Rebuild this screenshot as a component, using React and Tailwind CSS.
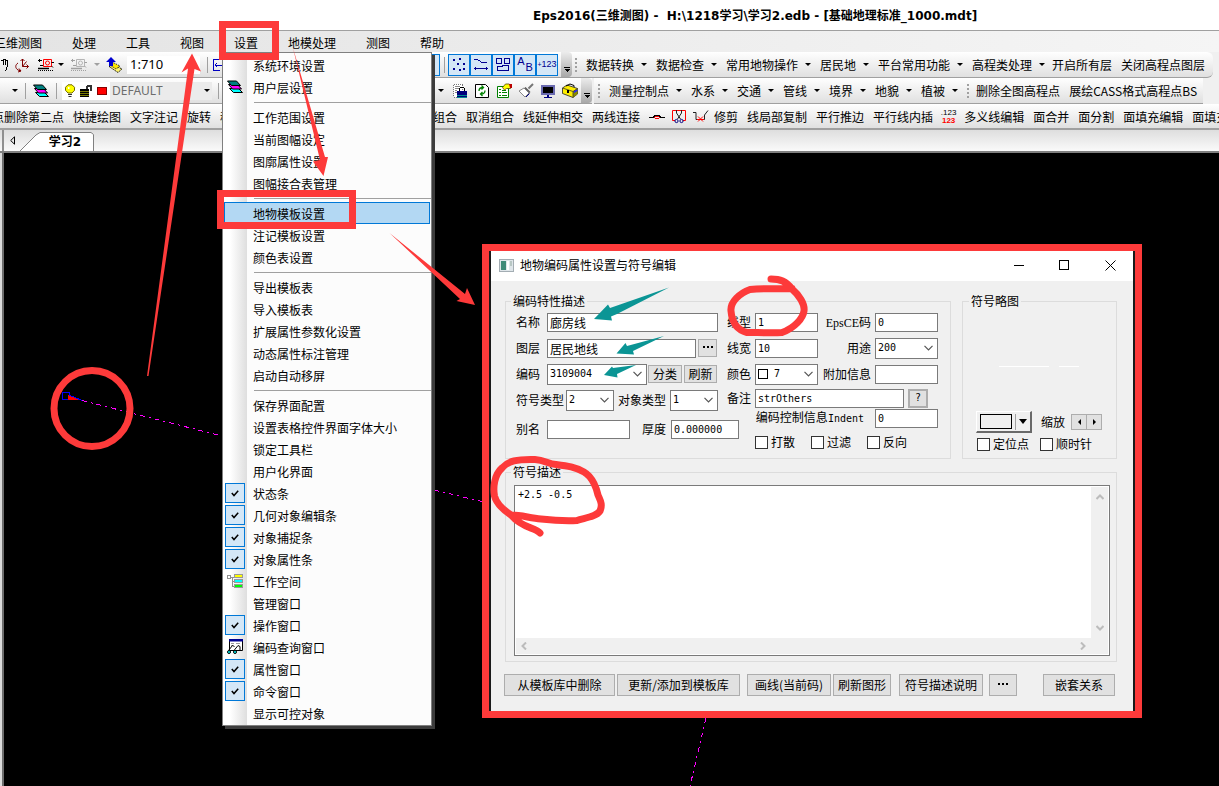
import React from 'react';

const RED = '#fd3a3a';
const TEAL = '#0b9595';

/* ---------- small building blocks ---------- */

function Svg({ w = 16, h = 16, children, label }) {
  return (
    <svg width={w} height={h} viewBox={`0 0 ${w} ${h}`} fill="none" className="shrink-0" role={label ? 'img' : undefined} aria-label={label} shapeRendering="crispEdges">
      {children}
    </svg>
  );
}

function Caret({ className = 'text-black' }) {
  return (
    <span className={`flex shrink-0 items-center ${className}`}>
      <svg width="6" height="3" viewBox="0 0 6 3" aria-hidden="true">
        <path d="M0 0h6L3 3z" fill="currentColor" />
      </svg>
    </span>
  );
}

function Chevron() {
  return (
    <svg width="9" height="6" viewBox="0 0 9 6" fill="none" aria-hidden="true" className="pointer-events-none absolute right-1 top-1/2 -translate-y-1/2">
      <path d="M.5 .8l4 4 4-4" stroke="#555" strokeWidth="1.2" />
    </svg>
  );
}

function IconButton({ label, className, children }) {
  return (
    <button type="button" aria-label={label} className={`flex h-full shrink-0 items-center justify-center ${className}`}>
      {children}
    </button>
  );
}

function Divider() {
  return <span className="h-4 w-px shrink-0 bg-[#a0a0a0]" />;
}

function Grip() {
  return (
    <svg width="3" height="16" viewBox="0 0 3 16" className="shrink-0" aria-hidden="true" shapeRendering="crispEdges">
      <path d="M1 1v15" stroke="#a0a0a0" strokeWidth="2" strokeDasharray="2 2" />
    </svg>
  );
}

function Overflow() {
  return (
    <button type="button" aria-label="更多按钮" className="flex h-full w-[11px] shrink-0 items-end justify-center rounded-r bg-linear-to-b from-[#ececec] to-[#a8a8a8] pb-1">
      <svg width="6" height="6" viewBox="0 0 6 6" aria-hidden="true" shapeRendering="crispEdges">
        <path d="M0 0h6v1H0zM0 2h6L3 5z" fill="#000" />
      </svg>
    </button>
  );
}

function DropButton({ children }) {
  return (
    <button type="button" className="flex h-full shrink-0 items-center gap-[7px] whitespace-nowrap pr-[9px]">
      {children}
      <Caret />
    </button>
  );
}

function TextButton({ children }) {
  return (
    <button type="button" className="h-full shrink-0 whitespace-nowrap">
      {children}
    </button>
  );
}

/* ---------- icons ---------- */

const LayersIcon = () => (
  <svg width="16" height="14" viewBox="0 0 16 14" fill="none" className="shrink-0" aria-hidden="true">
    <path d="M2.500 8.500h9l4 4h-9z" fill="#0ff" stroke="#000" />
    <path d="M1.500 4.500h9l4 4.500h-9z" fill="#f0f" stroke="#000" />
    <path d="M.5 1h9l4 4.500h-9z" fill="#008080" stroke="#000" />
  </svg>
);

const HandIcon = () => (
  <Svg w={8} h={16}>
    <path d="M0 4l2-1v5M2.500 2.500h2v5M5 3.500h1.500V9l-2 5" stroke="#000" />
  </Svg>
);

const RotateIcon = () => (
  <svg width="16" height="16" viewBox="0 0 16 16" fill="none" className="shrink-0" aria-hidden="true">
    <path d="M8.500 2v7.500h6M6.500 4l2-2 2 2M12.500 7.500l2 2-2 2M8.500 9.500l4-5M4 6c-3 2-3 5 0 7l3 1M5 11.500l2 2.500-3 1" stroke="#800000" />
  </svg>
);

const ViewBoxIcon = ({ main = '#f00', line = '#000' }) => (
  <svg width="16" height="14" viewBox="0 0 16 14" fill="none" className="shrink-0" aria-hidden="true">
    <path d="M5.500 1.500h8v7h-8z" stroke={main} />
    <circle cx="9.500" cy="5" r="2" stroke={main} />
    <path d="M0 2.500h4M1.500 1v3M13.500 4.500H16M2 7.500h3M13.500 8l1.500 1.500" stroke={line} />
    <path d="M0 10.500h11" stroke={line} strokeWidth="1.500" />
    <path d="M0 12.500h15" stroke={line} strokeDasharray="1 1" />
  </svg>
);

const UpLayersIcon = () => (
  <svg width="18" height="16" viewBox="0 0 18 16" fill="none" className="shrink-0" aria-hidden="true">
    <path d="M4 9.500l4-2 9 4.500-4 3.500z" fill="#fff36b" stroke="#000" strokeDasharray="1.500 1" />
    <path d="M4 7.500l4-2 7 3.500-4 3z" fill="#ffe800" stroke="#333" strokeDasharray="1.500 1" />
    <path d="M6 0l5 5H8v4H4V5H1z" fill="#0000d0" />
  </svg>
);

const FitIcon = () => (
  <Svg>
    <path d="M1.500 2v12M2 2.500h6M2 13.500h6M3 8h8M5 6L3 8l2 2" stroke="#0000c0" />
  </Svg>
);

const BulbIcon = () => (
  <svg width="12" height="14" viewBox="0 0 12 14" fill="none" className="shrink-0" aria-hidden="true">
    <path d="M4 .8h4l2.500 2.500v3L8 9H4L1.500 6.300v-3z" fill="#ff0" stroke="#776b00" />
    <path d="M4 10.500h4M4.500 12.500h3" stroke="#333" />
    <path d="M4 3h1.500v2H4z" fill="#fff" />
  </svg>
);

const LockIcon = () => (
  <Svg w={14} h={14}>
    <path d="M8 6V3l1-1h3v5" stroke="#333" strokeWidth="2" />
    <path d="M1 5h9v8H1z" fill="#000" />
    <path d="M1 7.500h9M1 9.500h9M1 11.500h9" stroke="#7a7a00" />
  </Svg>
);

const PageLockIcon = () => (
  <Svg>
    <path d="M1.500 1h9v13h-9z" fill="#fff" stroke="#777" strokeDasharray="1 1" />
    <path d="M3 3.500h5M3 5.500h4M3 7.500h2M3 9.500h2" stroke="#888" />
    <path d="M7.500 8V5.500l1-1h3l1 1V8" stroke="#000" />
    <path d="M5 8h10v7H5z" fill="#00007c" />
    <path d="M5 12.500h10M5 14.500h10" stroke="#008c8c" />
  </Svg>
);

const RefreshPageIcon = () => (
  <svg width="16" height="16" viewBox="0 0 16 16" fill="none" className="shrink-0" aria-hidden="true">
    <path d="M1.500 1.500h10l3 3v10h-13z" fill="#fff" stroke="#000" />
    <path d="M5 8c0-3 1.500-3.500 4-3.500M7.500 2.500l2 2-2 2M11 7.500c0 3-1.500 3.500-4 3.500M8.500 9l-2 2 2 2" stroke="#008000" strokeWidth="1.300" />
  </svg>
);

const FormEditIcon = () => (
  <svg width="16" height="16" viewBox="0 0 16 16" fill="none" className="shrink-0" aria-hidden="true">
    <path d="M1.500 3.500h11v11h-11z" fill="#fff" stroke="#008000" />
    <path d="M3 6.500h2M3 9.500h2M3 12.500h2M6 7.500h4M6 9.500h5M6 12.500h5" stroke="#008000" />
    <path d="M6.500 4.500l3-3.500H13l2.500 2-1 2.500h-4L8.500 7z" fill="#ff0" stroke="#554800" strokeWidth=".8" />
    <path d="M13 1h3v4h-2z" fill="#b00" />
  </svg>
);

const BrushIcon = () => (
  <svg width="16" height="16" viewBox="0 0 16 16" fill="none" className="shrink-0" aria-hidden="true">
    <path d="M15 1l-4.500 4.500" stroke="#777" strokeWidth="2" />
    <path d="M6 5l5 5-4 4-6-6z" fill="#fff" stroke="#888" />
    <path d="M7 4.500l5 5" stroke="#555" strokeWidth="1.500" />
    <path d="M11.500 10.500L8 14" stroke="#000080" />
  </svg>
);

const MonitorIcon = () => (
  <Svg>
    <path d="M1 2h14v10H1z" fill="#6a6ab0" />
    <path d="M3 4h10v6H3z" fill="#000" />
    <path d="M7 12h2v2H7zM4 14h8v1H4z" fill="#000080" />
  </Svg>
);

const ToolboxIcon = () => (
  <svg width="18" height="16" viewBox="0 0 18 16" fill="none" className="shrink-0" aria-hidden="true">
    <path d="M1.500 5L6 2l10.500 3.500V11L12 14.500 1.500 10.500z" fill="#ffee00" stroke="#222" strokeWidth=".8" />
    <path d="M12 8.500l4.500-3V11L12 14.500z" fill="#8a8a00" />
    <path d="M1.500 5L12 8.500l4.500-3M12 8.500v6" stroke="#333" strokeWidth=".8" />
    <path d="M5 3l4-2 4 1.500v1.500" stroke="#000" />
    <path d="M6 7h2v3H6z" fill="#000" />
    <path d="M13 8l3.500-1.500v1.500L13 10z" fill="#22f" />
  </svg>
);

const ArcIcon = () => (
  <Svg>
    <path d="M0 8.500h4l2-2h4l2 2h4" stroke="#000" />
    <path d="M6 7.500h4M5 8.500h1M10 8.500h1M6 9.500h4" stroke="#f00" />
  </Svg>
);

const CutBoxIcon = () => (
  <svg width="14" height="16" viewBox="0 0 14 16" fill="none" className="shrink-0" aria-hidden="true">
    <path d="M3 11.500H.5v-10h13v10H11" stroke="#f00" />
    <path d="M4.500 1v3l4 6M9.500 1v3l-4 6" stroke="#222" />
    <circle cx="4.500" cy="12" r="1.600" stroke="#000080" />
    <circle cx="9.500" cy="12" r="1.600" stroke="#000080" />
  </svg>
);

const TrimIcon = () => (
  <svg width="16" height="16" viewBox="0 0 16 16" fill="none" className="shrink-0" aria-hidden="true">
    <path d="M0 3.500h3v7h8.500V6L15 1.500" stroke="#222" />
    <path d="M5 7.500l5 5M10 7.500l-5 5M4 10.500h7" stroke="#f00" />
  </svg>
);

const ToggleIcons = [
  {
    label: '节点',
    art: (
      <path d="M2 2h2v2H2zM8 1h2v2H8zM6 6h2v2H6zM12 6h2v2h-2zM2 11h2v2H2zM8 12h2v2H8zM12 11h2v2h-2z" fill="#000090" />
    ),
  },
  { label: '线段', art: <path d="M1 2.500h4M5 3.500h2M7 4.500h1M8 5.500h6M1 11.500h14M2.500 10v3M13.500 10v3" stroke="#000090" /> },
  { label: '面块', art: <path d="M1.500 1.500h5v5h-5zM9.500 1.500h5v5h-5zM2.500 13.500v-4h5v-1h6v5z" stroke="#000090" /> },
];

/* ---------- application bars ---------- */

function MenuBar() {
  const items = ['三维测图', '处理', '工具', '视图', '设置', '地模处理', '测图', '帮助'];
  return (
    <nav className="flex h-[22px] items-center gap-[30px] overflow-hidden border-t border-[#a0a0a0] bg-linear-to-r from-[#e4e4e4] to-[#f5f5f5] pt-0.5">
      {items.map((t, i) => (
        <button type="button" key={t} className={i === 0 ? '-ml-1.5 shrink-0' : 'shrink-0'}>
          {t}
        </button>
      ))}
    </nav>
  );
}

const bar = 'flex h-full shrink-0 items-center border-b border-[#a0a0a0] bg-linear-to-b from-white to-[#e0e0e0]';

function ToolbarOne() {
  return (
    <div className="flex h-[26px] overflow-hidden">
      <div className={bar}>
        <div className="flex h-full w-[440px] items-center">
          <IconButton label="平移" className="w-[10px]"><HandIcon /></IconButton>
          <IconButton label="旋转视图" className="w-6"><RotateIcon /></IconButton>
          <IconButton label="窗口缩放" className="w-6"><ViewBoxIcon /></IconButton>
          <Caret />
          <IconButton label="视图后退" className="w-[30px]"><ViewBoxIcon main="#b5b5b5" line="#a0a0a0" /></IconButton>
          <Caret className="text-[#a0a0a0]" />
          <IconButton label="上移图层" className="w-[27px]"><UpLayersIcon /></IconButton>
          <label className="relative flex h-[18px] w-[73px] items-center bg-white">
            <select aria-label="比例尺" defaultValue="1:710" className="h-full w-full appearance-none pl-[3px] font-['Noto_Sans'] text-[13px] leading-none">
              <option>1:710</option>
            </select>
            <span className="absolute right-1"><Caret /></span>
          </label>
          <span className="w-[7px]" />
          <Divider />
          <IconButton label="全图" className="w-6"><FitIcon /></IconButton>
          <button type="button" aria-label="捕捉" className="ml-auto flex h-[22px] w-[22px] items-center justify-center border border-[#0078d7] bg-[#d4e7f7]">
            <Svg w={14}><path d="M3 4h5l3 3-4 5" stroke="#000090" /></Svg>
          </button>
        </div>
        <div className="flex w-2 justify-center"><Divider /></div>
        {ToggleIcons.map((t) => (
          <button type="button" key={t.label} aria-label={t.label} className="flex h-[22px] w-[22px] items-center justify-center border border-[#0078d7] bg-[#d4e7f7]">
            <Svg>{t.art}</Svg>
          </button>
        ))}
        <button type="button" className="flex h-[22px] w-[22px] items-center justify-center gap-px border border-[#0078d7] bg-[#d4e7f7] font-['Liberation_Sans'] text-[11px] leading-none text-[#000090]">
          <span className="pb-1.5">A</span><span className="pt-1.5">B</span>
        </button>
        <button type="button" className="flex h-[22px] w-[22px] items-center justify-center border border-[#0078d7] bg-[#d4e7f7] font-['Liberation_Sans'] text-[9px] leading-none text-[#000090]">
          <span className="text-[7px]">+</span>123
        </button>
        <span className="w-[3px]" />
        <Overflow />
      </div>
      <div className={`${bar} rounded-r-md pl-[3px] pr-2`}>
        <Grip />
        <span className="w-2" />
        {['数据转换', '数据检查', '常用地物操作', '居民地', '平台常用功能', '高程类处理'].map((t) => (
          <DropButton key={t}>{t}</DropButton>
        ))}
        <div className="-ml-0.5 flex h-full gap-[9px]">
          <TextButton>开启所有层</TextButton>
          <TextButton>关闭高程点图层</TextButton>
        </div>
      </div>
    </div>
  );
}

function ToolbarTwo() {
  return (
    <div className="flex h-[26px] overflow-hidden">
      <div className={bar}>
        <div className="flex h-full w-[433px] items-center">
          <IconButton label="选择" className="w-[25px] pl-1"><Caret /></IconButton>
          <Divider />
          <IconButton label="图层" className="w-[30px]"><LayersIcon /></IconButton>
          <Divider />
          <div className="ml-[5px] flex h-[18px] w-[150px] items-center bg-white">
            <IconButton label="层可见" className="w-4"><BulbIcon /></IconButton>
            <IconButton label="层锁定" className="w-4"><LockIcon /></IconButton>
            <span className="mx-[3px] h-2 w-2.5 border border-[#800] bg-[#f00]" />
            <label className="relative flex h-full flex-1 items-center bg-[#ebebeb]">
              <select aria-label="当前层" defaultValue="DEFAULT" className="h-full w-full appearance-none pl-0.5 font-['Noto_Sans'] text-xs text-[#6d6d6d]">
                <option>DEFAULT</option>
              </select>
              <span className="absolute right-0.5"><Caret /></span>
            </label>
          </div>
          <span className="w-1.5" />
          <Divider />
        </div>
        <IconButton label="下拉" className="w-4"><Caret /></IconButton>
        <IconButton label="文档锁定" className="w-[22px]"><PageLockIcon /></IconButton>
        <IconButton label="刷新" className="w-[22px]"><RefreshPageIcon /></IconButton>
        <IconButton label="属性" className="w-[22px]"><FormEditIcon /></IconButton>
        <IconButton label="格式刷" className="w-[22px]"><BrushIcon /></IconButton>
        <IconButton label="显示" className="w-[22px]"><MonitorIcon /></IconButton>
        <IconButton label="工具箱" className="w-[22px]"><ToolboxIcon /></IconButton>
        <Overflow />
      </div>
      <div className={`${bar} ml-0.5 pl-1`}>
        <Grip />
        <span className="w-2" />
        {['测量控制点', '水系', '交通', '管线', '境界', '地貌', '植被'].map((t) => (
          <DropButton key={t}>{t}</DropButton>
        ))}
        <Grip />
        <div className="flex h-full gap-[9px] pl-1.5">
          <TextButton>删除全图高程点</TextButton>
          <TextButton>展绘CASS格式高程点BS</TextButton>
        </div>
        <span className="w-1.5" />
      </div>
    </div>
  );
}

function ToolbarThree() {
  return (
    <div className="flex h-[26px] items-center gap-[9px] overflow-hidden border-b-2 border-[#a0a0a0] bg-linear-to-b from-white to-[#e0e0e0] pt-0.5">
      <div className="flex h-full w-[424px] shrink-0 gap-[9px] overflow-hidden">
        <div className="-ml-2 flex h-full shrink-0 gap-[9px]">
          {['点删除第二点', '快捷绘图', '文字注记', '旋转', '移动'].map((t) => (
            <TextButton key={t}>{t}</TextButton>
          ))}
        </div>
      </div>
      {['组合', '取消组合', '线延伸相交', '两线连接'].map((t) => (
        <TextButton key={t}>{t}</TextButton>
      ))}
      <div className="flex h-full gap-[5px]">
        <IconButton label="圆弧" className="w-4"><ArcIcon /></IconButton>
        <IconButton label="裁剪" className="w-[18px]"><CutBoxIcon /></IconButton>
        <IconButton label="打断" className="w-4"><TrimIcon /></IconButton>
        <TextButton>修剪</TextButton>
      </div>
      {['线局部复制', '平行推边', '平行线内插'].map((t) => (
        <TextButton key={t}>{t}</TextButton>
      ))}
      <button type="button" className="flex h-full w-[13px] shrink-0 flex-col items-center justify-center font-['Liberation_Sans'] text-[8px] leading-[8px]">
        <span>.123</span>
        <span className="font-bold text-[#f00]">123</span>
      </button>
      {['多义线编辑', '面合并', '面分割', '面填充编辑', '面填充'].map((t) => (
        <TextButton key={t}>{t}</TextButton>
      ))}
    </div>
  );
}

function TabBar() {
  return (
    <div className="flex h-[23px] items-end border-b-2 border-[#808080] bg-linear-to-b from-[#dedede] to-[#fafafa]">
      <button type="button" aria-label="向左" className="ml-0.5 flex h-full w-[18px] items-center justify-center border-l-2 border-[#909090]">
        <svg width="5" height="9" viewBox="0 0 5 9" fill="none" aria-hidden="true"><path d="M4.500 .8v7.400L.7 4.500z" stroke="#000" /></svg>
      </button>
      <button type="button" className="relative flex h-[19px] w-[74px] items-center justify-center pl-4 font-['DejaVu_Sans','Noto_Sans_CJK_SC',sans-serif] font-bold">
        <svg width="74" height="19" viewBox="0 0 74 19" className="absolute inset-0" aria-hidden="true">
          <path d="M0 19L16 3l4-2.500h51l2.500 2V19" fill="#fff" stroke="#808080" />
        </svg>
        <span className="relative">学习2</span>
      </button>
    </div>
  );
}

/* ---------- settings menu ---------- */

const WorkspaceIcon = () => (
  <Svg>
    <path d="M.5 2.500h3v3h-3zM4 4.500h3M5.500 4v9M5 8.500h3M5 13.500h3" stroke="#909090" />
    <path d="M7.500 1.500h8v3h-8z" fill="#ff0" stroke="#999" />
    <path d="M7.500 6.500h8v3h-8z" fill="#0ff" stroke="#999" />
    <path d="M7.500 11.500h8v3h-8z" fill="#0f0" stroke="#999" />
  </Svg>
);

const CodeQueryIcon = () => (
  <svg width="16" height="16" viewBox="0 0 16 16" fill="none" className="shrink-0" aria-hidden="true">
    <path d="M2.500 1.500h13v10h-13z" fill="#fff" stroke="#000" />
    <path d="M2 0h14v2.500H2z" fill="#000090" />
    <path d="M4 4.500h3M9 4.500h4M4 6.500h2" stroke="#999" />
    <path d="M1.500 11.500l4-5 2 1M7 11.500l4-5 2 1v3.500" stroke="#000" />
    <circle cx="2" cy="13" r="1.500" fill="#0ff" stroke="#000" />
    <circle cx="8" cy="13" r="1.500" fill="#0ff" stroke="#000" />
  </svg>
);

const MENU = [
  ['系统环境设置'], ['用户层设置', 'layers'], null,
  ['工作范围设置'], ['当前图幅设定'], ['图廓属性设置'], ['图幅接合表管理'], null,
  ['地物模板设置', 'active'], ['注记模板设置'], ['颜色表设置'], null,
  ['导出模板表'], ['导入模板表'], ['扩展属性参数化设置'], ['动态属性标注管理'], ['启动自动移屏'], null,
  ['保存界面配置'], ['设置表格控件界面字体大小'], ['锁定工具栏'], ['用户化界面'],
  ['状态条', 'check'], ['几何对象编辑条', 'check'], ['对象捕捉条', 'check'], ['对象属性条', 'check'],
  ['工作空间', 'tree'], ['管理窗口'], ['操作窗口', 'check'], ['编码查询窗口', 'code'],
  ['属性窗口', 'check'], ['命令窗口', 'check'], ['显示可控对象'],
];

function MenuMark({ kind }) {
  if (kind === 'check') {
    return (
      <span className="flex h-5 w-5 items-center justify-center border border-[#0078d7] bg-[#d4e7f7]">
        <svg width="8" height="7" viewBox="0 0 8 7" fill="none" aria-hidden="true"><path d="M.8 3l2.200 2.500L7.200 .8" stroke="#000" strokeWidth="1.500" /></svg>
      </span>
    );
  }
  if (kind === 'layers') return <LayersIcon />;
  if (kind === 'tree') return <WorkspaceIcon />;
  if (kind === 'code') return <CodeQueryIcon />;
  return null;
}

function SettingsMenu() {
  return (
    <div role="menu" className="absolute left-[222px] top-[52px] w-[210px] border border-[#808080] bg-[#fcfcfc] py-px shadow-[3px_3px_0_#3c3c3c]">
      <span className="absolute inset-y-0 left-0 w-6 bg-linear-to-r from-white from-30% to-[#dedede]" />
      {MENU.map((m, i) =>
        m === null ? (
          <div key={i} role="separator" className="relative ml-[31px] h-2 pt-1"><div className="h-px bg-[#a0a0a0]" /></div>
        ) : (
          <button
            key={i}
            type="button"
            role={m[1] === 'check' ? 'menuitemcheckbox' : 'menuitem'}
            aria-checked={m[1] === 'check' ? true : undefined}
            className={`relative mx-px flex h-[22px] w-[206px] items-center border ${m[1] === 'active' ? 'border-[#0078d7] bg-[#b3d8f3]' : 'border-transparent'}`}
          >
            <span className="flex w-5 shrink-0 items-center justify-center"><MenuMark kind={m[1]} /></span>
            <span className="whitespace-nowrap pl-2 pt-0.5">{m[0]}</span>
          </button>
        ),
      )}
    </div>
  );
}

/* ---------- symbol dialog ---------- */

const MONO = "font-['DejaVu_Sans_Mono'] text-[10px]";

function Field({ label, labelClass = '', value = '', className, cjk }) {
  return (
    <label className="flex items-center">
      <span className={`shrink-0 whitespace-nowrap ${labelClass}`}>{label}</span>
      <input type="text" defaultValue={value} className={`h-[19px] border border-[#7a7a7a] bg-white pl-0.5 leading-none ${cjk ? '' : MONO} ${className}`} />
    </label>
  );
}

function Combo({ label, labelClass = '', value, className, swatch }) {
  return (
    <label className="flex items-center">
      <span className={`shrink-0 whitespace-nowrap ${labelClass}`}>{label}</span>
      <span className={`relative flex h-[21px] items-center border border-[#7a7a7a] bg-white ${className}`}>
        {swatch && <span className="ml-0.5 h-2.5 w-2.5 shrink-0 border border-black bg-white" />}
        <select defaultValue={value} className={`h-full w-full appearance-none bg-transparent leading-none ${MONO} ${swatch ? 'pl-1.5' : 'pl-0.5'}`}>
          <option>{value}</option>
        </select>
        <Chevron />
      </span>
    </label>
  );
}

function Check({ children, className = '' }) {
  return (
    <label className={`flex items-center gap-[3px] whitespace-nowrap ${className}`}>
      <input type="checkbox" className="h-[13px] w-[13px] appearance-none border border-[#333] bg-white" />
      {children}
    </label>
  );
}

function PushButton({ children, className = '', label }) {
  return (
    <button type="button" aria-label={label} className={`flex shrink-0 items-center justify-center whitespace-nowrap border border-[#adadad] bg-[#e1e1e1] ${className}`}>
      {children}
    </button>
  );
}

function Dots() {
  return (
    <svg width="10" height="4" viewBox="0 0 10 4" aria-hidden="true" shapeRendering="crispEdges"><path d="M0 0h2v2H0zM4 0h2v2H4zM8 0h2v2H8z" fill="#000" /></svg>
  );
}

function CodeGroup() {
  return (
    <fieldset className="h-[167px] w-[446px] border border-[#dcdcdc]">
      <legend className="ml-[5px] h-[18px] px-0.5 leading-[18px]">编码特性描述</legend>
      <div className="-mt-px flex pl-2.5">
        <div className="w-[211px]">
          <div className="flex h-[26px] items-center"><Field label="名称" labelClass="w-[31px]" value="廊房线" className="w-[171px]" cjk /></div>
          <div className="flex h-[26px] items-center gap-0.5">
            <Field label="图层" labelClass="w-[31px]" value="居民地线" className="w-[149px]" cjk />
            <PushButton label="选择图层" className="h-[18px] w-[19px]"><Dots /></PushButton>
          </div>
          <div className="flex h-[26px] items-center gap-px">
            <Combo label="编码" labelClass="w-[31px]" value="3109004" className="w-[100px]" />
            <PushButton className="h-[18px] w-[34px]">分类</PushButton>
            <PushButton className="ml-px h-[18px] w-[33px]">刷新</PushButton>
          </div>
          <div className="flex h-[26px] items-center gap-1">
            <Combo label="符号类型" labelClass="w-[50px]" value="2" className="w-12" />
            <Combo label="对象类型" labelClass="w-[52px]" value="1" className="w-12" />
          </div>
          <div className="flex h-8 items-center gap-3">
            <Field label="别名" labelClass="w-[31px]" className="w-[83px]" />
            <Field label="厚度" labelClass="w-[29px]" value="0.000000" className="w-[68px]" />
          </div>
        </div>
        <div className="w-[211px]">
          <div className="flex h-[26px] items-center justify-between">
            <Field label="线型" labelClass="w-7" value="1" className="w-[63px]" />
            <Field label={<><span className="font-['Liberation_Serif']">EpsCE</span>码</>} labelClass="pr-1" value="0" className="w-[63px]" />
          </div>
          <div className="flex h-[26px] items-center justify-between">
            <Field label="线宽" labelClass="w-7" value="10" className="w-[63px]" />
            <Combo label="用途" labelClass="pr-1" value="200" className="w-[63px]" />
          </div>
          <div className="flex h-[26px] items-center justify-between">
            <Combo label="颜色" labelClass="w-7" value="7" className="w-[63px]" swatch />
            <Field label="附加信息" labelClass="pr-1" className="w-[63px]" />
          </div>
          <div className="flex h-[22px] items-center gap-1">
            <Field label="备注" labelClass="w-7" value="strOthers" className="w-[149px]" />
            <PushButton className={`h-[19px] w-5 outline-1 -outline-offset-2 outline-[#adadad] ${MONO}`}>?</PushButton>
          </div>
          <div className="flex h-[18px] items-center justify-end">
            <Field label={<>编码控制信息<span className={MONO}>Indent</span></>} labelClass="pr-[11px]" value="0" className="w-[63px]" />
          </div>
          <div className="flex h-[30px] items-center gap-4 pl-7">
            <Check>打散</Check>
            <Check>过滤</Check>
            <Check>反向</Check>
          </div>
        </div>
      </div>
    </fieldset>
  );
}

function PreviewGroup() {
  return (
    <fieldset className="h-[167px] flex-1 border border-[#dcdcdc]">
      <legend className="ml-1.5 h-[18px] px-0.5 leading-[18px]">符号略图</legend>
      <div className="-mt-px flex h-[102px] items-center gap-2.5 pl-9 pt-3">
        <span className="h-px w-[50px] bg-white" />
        <span className="h-px w-5 bg-white" />
      </div>
      <div className="flex h-[22px] items-center pl-[13px]">
        <button type="button" aria-label="颜色选择" className="flex h-[22px] w-14 items-center gap-[3px] border-b-2 border-l border-r-2 border-t border-b-[#696969] border-l-white border-r-[#696969] border-t-white pl-[3px]">
          <span className="h-[15px] w-8 border border-black" />
          <span className="h-4 w-px bg-[#a0a0a0]" />
          <svg width="8" height="5" viewBox="0 0 8 5" aria-hidden="true"><path d="M0 0h8L4 5z" fill="#000" /></svg>
        </button>
        <span className="w-[35px] pl-[9px]">缩放</span>
        <PushButton label="缩小" className="ml-1 h-4 w-4">
          <svg width="3" height="6" viewBox="0 0 3 6" aria-hidden="true"><path d="M3 0v6L0 3z" fill="#000" /></svg>
        </PushButton>
        <PushButton label="放大" className="-ml-px h-4 w-4">
          <svg width="3" height="6" viewBox="0 0 3 6" aria-hidden="true"><path d="M0 0v6l3-3z" fill="#000" /></svg>
        </PushButton>
      </div>
      <div className="flex h-5 items-center gap-[11px] pl-3.5 pt-0.5">
        <Check>定位点</Check>
        <Check>顺时针</Check>
      </div>
    </fieldset>
  );
}

function ScrollArrow({ d }) {
  return (
    <svg width="8" height="8" viewBox="0 0 8 8" fill="none" aria-hidden="true"><path d={d} stroke="#bcbcbc" strokeWidth="2" /></svg>
  );
}

function DescriptionGroup() {
  return (
    <fieldset className="mt-1 h-[199px] border border-[#dcdcdc] px-[7px]">
      <legend className="-ml-0.5 h-[18px] px-0.5 leading-[18px]"><label htmlFor="symbol-desc">符号描述</label></legend>
      <div className="-mr-px ml-px mt-1 flex h-[171px] flex-col border border-[#7a7a7a] bg-white p-px">
        <div className="flex min-h-0 flex-1">
          <textarea id="symbol-desc" defaultValue="+2.5 -0.5" className={`min-w-0 flex-1 resize-none bg-white px-0.5 py-px leading-[14px] ${MONO}`} />
          <div className="flex w-[17px] flex-col items-center justify-between bg-[#f0f0f0] py-1.5">
            <ScrollArrow d="M.5 6L4 2.500 7.500 6" />
            <ScrollArrow d="M.5 2L4 5.500 7.500 2" />
          </div>
        </div>
        <div className="flex h-4 items-center justify-between bg-[#f0f0f0] pl-1 pr-[21px]">
          <ScrollArrow d="M6 .5L2.500 4 6 7.500" />
          <ScrollArrow d="M2 .5L5.500 4 2 7.500" />
        </div>
      </div>
    </fieldset>
  );
}

function SymbolDialog() {
  return (
    <div className="absolute left-[482px] top-[244px] border-[7px] border-[#fd3a3a] bg-[#1a1a1a] px-0.5">
      <section role="dialog" aria-label="地物编码属性设置与符号编辑" className="flex h-[460px] w-[642px] flex-col bg-[#f0f0f0]">
        <header className="flex h-[30px] shrink-0 items-center bg-white pb-0.5 pl-2">
          <svg width="15" height="13" viewBox="0 0 15 13" aria-hidden="true">
            <rect x=".5" y=".5" width="14" height="12" fill="#dfe6ea" stroke="#a3adb3" />
            <rect x="2" y="2" width="5" height="9" fill="#3f8a78" />
            <rect x="8" y="2" width="2" height="9" fill="#fff" />
            <rect x="11" y="2" width="2" height="5" fill="#b8c7c4" />
          </svg>
          <h2 className="pl-[6px]">地物编码属性设置与符号编辑</h2>
          <div className="ml-auto flex h-full">
            <IconButton label="最小化" className="w-[45px]"><Svg w={10} h={10}><path d="M0 5.500h10" stroke="#000" /></Svg></IconButton>
            <IconButton label="最大化" className="w-[46px]"><Svg w={10} h={10}><path d="M.5 .5h9v9h-9z" stroke="#000" /></Svg></IconButton>
            <IconButton label="关闭" className="w-[46px]">
              <svg width="11" height="11" viewBox="0 0 11 11" aria-hidden="true"><path d="M.5 .5l10 10M10.500 .5l-10 10" stroke="#000" /></svg>
            </IconButton>
          </div>
        </header>
        <div className="flex flex-1 flex-col pl-3.5 pr-4 pt-[11px]">
          <div className="flex gap-[11px]">
            <CodeGroup />
            <PreviewGroup />
          </div>
          <DescriptionGroup />
          <footer className="-ml-px mt-3 flex">
            <PushButton className="h-[22px] w-[111px]">从模板库中删除</PushButton>
            <PushButton className="ml-0.5 h-[22px] w-[123px]">更新/添加到模板库</PushButton>
            <PushButton className="ml-[7px] h-[22px] w-[84px]">画线(当前码)</PushButton>
            <PushButton className="ml-0.5 h-[22px] w-[58px]">刷新图形</PushButton>
            <PushButton className="ml-2 h-[22px] w-[84px]">符号描述说明</PushButton>
            <PushButton label="更多" className="ml-1.5 h-[22px] w-[28px]"><Dots /></PushButton>
            <PushButton className="ml-auto mr-0.5 h-[22px] w-[72px]">嵌套关系</PushButton>
          </footer>
        </div>
      </section>
    </div>
  );
}

/* ---------- drawing and hand-made marks ---------- */

function CanvasDrawing() {
  return (
    <svg width="1219" height="786" viewBox="0 0 1219 786" fill="none" className="pointer-events-none absolute left-0 top-0" aria-hidden="true">
      <g shapeRendering="crispEdges">
        <path d="M82 400.500L222 436M434 490L482 501.500M706 718L690 786" stroke="#f0f" strokeDasharray="5 4 2 4" />
        <path d="M62.500 392.500h7v7h-7z" stroke="#00f" />
        <path d="M68 395l14 5.500-14-1z" fill="#f00" />
        <path d="M69 395l13 5.500" stroke="#00f" />
      </g>
    </svg>
  );
}

function Annotations() {
  return (
    <svg width="1219" height="786" viewBox="0 0 1219 786" fill="none" className="pointer-events-none absolute left-0 top-0" aria-hidden="true">
      <g stroke={RED} strokeWidth="7">
        <path d="M222.500 24.500h53v32h-53z" />
        <path d="M220.500 193.500h132v32h-132z" />
        <circle cx="92" cy="408.500" r="38" />
        <path strokeLinecap="round" strokeLinejoin="round" d="M771 279C780 279 786 281 792 289C799 295 805 304 804 311C803 318 795 328 782 332.500C772 333 757 332.500 747 332.500C737 330 732 323 731 311C730 302 740 293 750 289.500C765 288 778 289 792 288.500" />
        <path strokeLinecap="round" strokeLinejoin="round" d="M540 533C535 527 523 529 511 515C502 509 496 502 494.500 496C493 488 494 475 502 468C508 461 517 459 535 459.500C545 460 548 464 556 464.500C568 466 575 467 584 472C593 477 597 490 598 495C600 500 603 504 600 511C596 517 584 518 577 520.500C566 521 550 520 541 519C530 518 521 515 512 515" />
      </g>
      <g fill={RED}>
        <path d="M147 376L188 68.500 181.500 72.500 192 53.500 201 71.500 194.500 69 148.500 376z" />
        <path d="M293 48L320 160 313 161.500 323.500 176 328 157 325 157z" />
        <path d="M389.500 233L465 294 467 288 475 305 456.500 301 460 299z" />
      </g>
      <g fill={TEAL}>
        <path d="M669 287.500L610 308 608 304.500 594 319 612 320.500 611 316.500 617 314z" />
        <path d="M664 336L627 346 625.500 343 616.500 353.500 634 354.500 633 351z" />
        <path d="M636 365L613 368 612 366.500 604 375 617.500 377.500 617 374z" />
      </g>
    </svg>
  );
}

export default function App() {
  return (
    <div className="relative flex min-h-screen w-full flex-col overflow-hidden bg-black font-['Noto_Sans_CJK_SC',sans-serif] text-xs leading-4 text-black">
      <header className="flex h-[30px] items-center whitespace-nowrap bg-white pl-[533px]">
        <h1 className="pt-0.5 font-['DejaVu_Sans','Noto_Sans_CJK_SC',sans-serif] text-xs font-bold">
          Eps2016(三维测图) - &nbsp;H:\1218学习\学习2.edb - [基础地理标准_1000.mdt]
        </h1>
      </header>
      <MenuBar />
      <div className="bg-[#f0f0f0]">
        <ToolbarOne />
        <ToolbarTwo />
        <ToolbarThree />
      </div>
      <TabBar />
      <main className="flex flex-1 border-l-2 border-[#dcdcdc] bg-black">
        <div className="w-0.5 bg-[#6e6e6e]" />
      </main>
      <CanvasDrawing />
      <SettingsMenu />
      <SymbolDialog />
      <Annotations />
    </div>
  );
}
